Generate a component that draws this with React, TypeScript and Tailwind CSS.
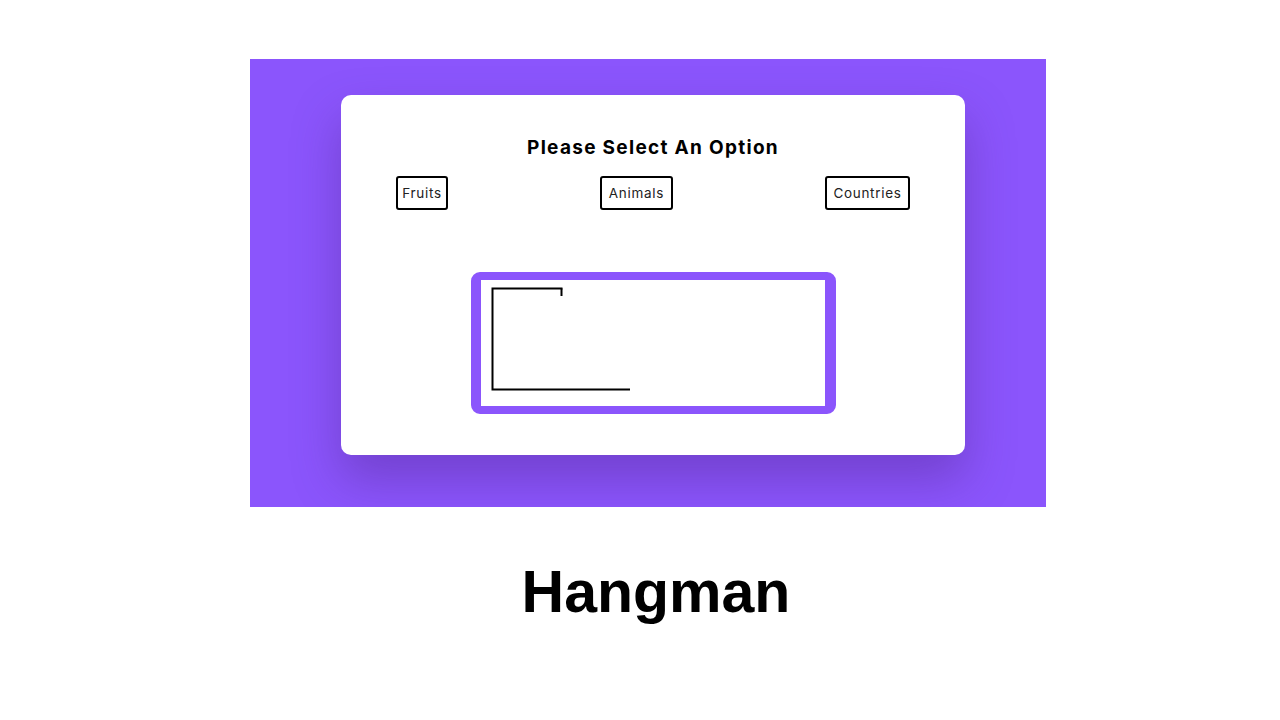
import React from "react";

const CATEGORIES = [
  { label: "Fruits", w: "w-[52px]" },
  { label: "Animals", w: "w-[73px]" },
  { label: "Countries", w: "w-[85px]" },
];

function Gallows() {
  // base, pole, beam and rope drawn on the canvas
  return (
    <svg width="344" height="126" viewBox="0 0 344 126" className="block">
      <path d="M80.5 8.5 V16" fill="none" stroke="#000" strokeWidth="2" />
      <path d="M149 109.5 H11.5 V8.5 H81.5" fill="none" stroke="#000" strokeWidth="2" />
    </svg>
  );
}

export default function App() {
  return (
    <div className="w-[1280px] h-[720px] bg-white flex flex-col items-center" style={{ fontFamily: "Inter, 'Open Sans', sans-serif" }}>
      {/* Panel morado */}
      <div className="mt-[59px] ml-[16px] w-[796px] h-[448px] bg-[#8b55fc] flex justify-center pt-[36px] overflow-hidden">
        <div className="ml-[10px] w-[624px] h-[360px] bg-white rounded-[10px] shadow-[0_24px_48px_rgba(70,30,120,0.35)] flex flex-col items-center">
          <h1 className="mt-[42px] text-[19px] leading-[22px] font-bold text-black tracking-[1.3px]">Please Select An Option</h1>

          <div className="mt-[17px] w-full px-[55px] flex justify-between">
            {CATEGORIES.map((c) => (
              <button
                key={c.label}
                className={`${c.w} h-[34px] border-2 border-black rounded-[3px] text-[13.5px] tracking-[0.7px] text-[#222] bg-white`}
              >
                {c.label}
              </button>
            ))}
          </div>

          {/* Canvas del ahorcado */}
          <div className="mt-[62px] ml-[1px] border-t-8 border-b-8 border-l-[10px] border-r-[11px] border-[#8b55fc] rounded-[9px] bg-white">
            <Gallows />
          </div>
        </div>
      </div>

      <h2
        className="mt-[50px] ml-[32px] text-[59px] leading-[70px] font-bold text-black"
        style={{ fontFamily: "'Liberation Sans', Arial, sans-serif" }}
      >
        Hangman
      </h2>
    </div>
  );
}
